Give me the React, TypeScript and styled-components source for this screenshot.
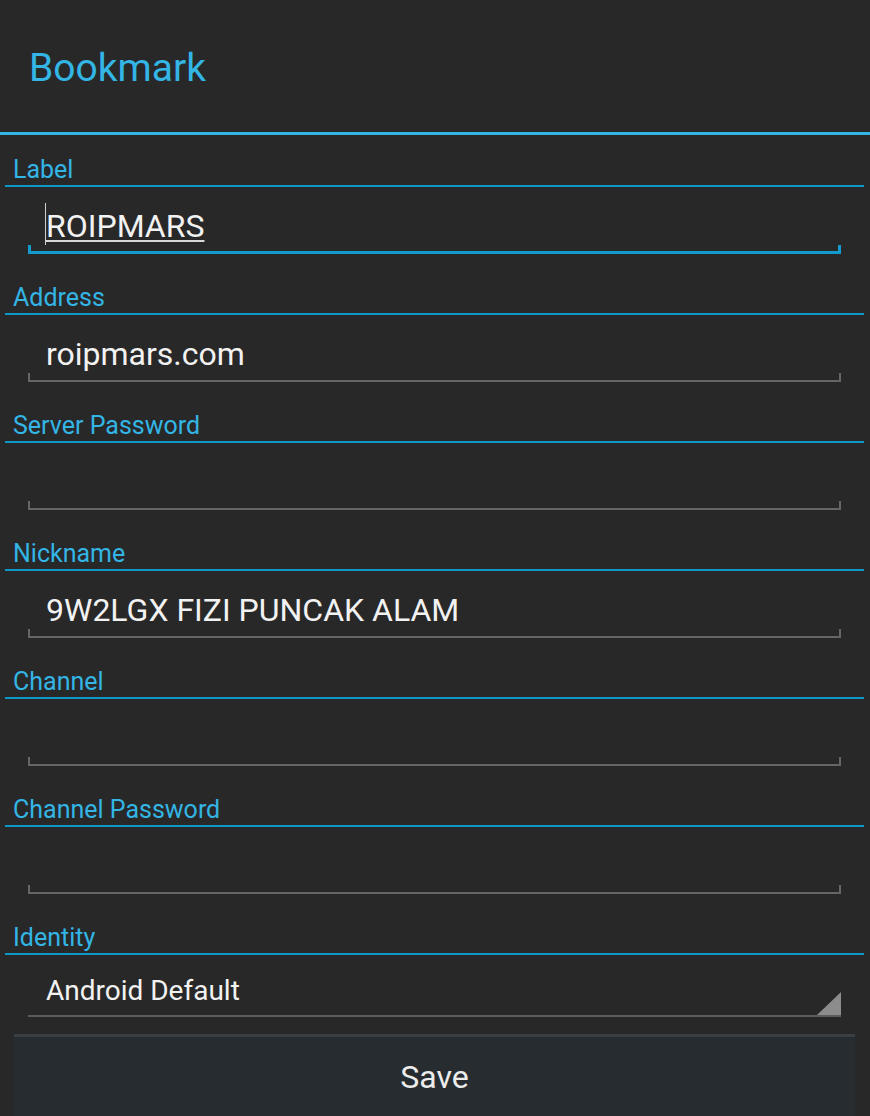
import styled, { createGlobalStyle } from "styled-components";

const GlobalStyle = createGlobalStyle`
  html, body {
    margin: 0;
    padding: 0;
    background: #282828;
    font-family: Roboto, "Noto Sans", sans-serif;
  }
`;

const Screen = styled.div`
  width: 870px;
  min-height: 1116px;
  background: #282828;
  overflow: hidden;
`;

const TitleBar = styled.header`
  height: 135px;
  display: flex;
  align-items: center;
  padding: 3px 0 0 29px;
  box-sizing: border-box;
  border-bottom: 3px solid #33b5e5;
`;

const Title = styled.h1`
  margin: 0;
  font-size: 39px;
  font-weight: 400;
  color: #33b5e5;
  line-height: 46px;
`;

const Form = styled.main`
  padding-top: 20px;
`;

const Category = styled.div`
  margin: 0 6px 0 5px;
  padding-left: 8px;
  font-size: 25px;
  line-height: 30px;
  color: #33b5e5;
  border-bottom: 2px solid #0f96c8;
`;

const Field = styled.div`
  margin: 0 29px 0 28px;
  padding: 20px 0 29px;
`;

const FieldText = styled.div<{ $composing?: boolean }>`
  position: relative;
  padding-left: 18px;
  height: 38px;
  font-size: 32px;
  line-height: 38px;
  color: #f2f2f2;
  white-space: nowrap;
  span {
    text-decoration: ${(p) => (p.$composing ? "underline" : "none")};
    text-decoration-thickness: 2px;
    text-underline-offset: 3px;
    text-decoration-color: #d8d8d8;
  }
`;

const Caret = styled.i`
  position: absolute;
  left: 17px;
  top: -4px;
  bottom: 0;
  width: 1px;
  background: #d0d0d0;
`;

const Underline = styled.div<{ $focused?: boolean }>`
  height: 9px;
  box-sizing: border-box;
  border: 0 solid ${(p) => (p.$focused ? "#1399cb" : "#666666")};
  border-width: ${(p) => (p.$focused ? "0 3px 3px 3px" : "0 2px 2px 2px")};
`;

const Spinner = styled.div`
  margin: 0 29px 0 28px;
  padding-top: 19px;
  display: flex;
  align-items: flex-end;
  border-bottom: 2px solid #595c60;
`;

const SpinnerText = styled.div`
  flex: 1;
  padding-left: 18px;
  margin-bottom: 7px;
  font-size: 28px;
  line-height: 34px;
  color: #f2f2f2;
`;

const Corner = styled.svg`
  display: block;
  width: 24px;
  height: 23px;
`;

const SaveButton = styled.button`
  display: block;
  margin: 17px 0 0 14px;
  width: 841px;
  padding: 21px 0 30px;
  border: 0;
  border-top: 3px solid #3a3f44;
  background: #272c30;
  color: #ececec;
  font-family: Roboto, "Noto Sans", sans-serif;
  font-size: 32px;
  line-height: 38px;
  text-align: center;
`;

interface IField {
  label: string;
  value: string;
  focused?: boolean;
}

const fields: IField[] = [
  { label: "Label", value: "ROIPMARS", focused: true },
  { label: "Address", value: "roipmars.com" },
  { label: "Server Password", value: "" },
  { label: "Nickname", value: "9W2LGX FIZI PUNCAK ALAM" },
  { label: "Channel", value: "" },
  { label: "Channel Password", value: "" },
];

export default function App() {
  return (
    <>
      <GlobalStyle />
      <Screen>
        <TitleBar>
          <Title>Bookmark</Title>
        </TitleBar>
        <Form>
          {fields.map((f) => (
            <section key={f.label}>
              <Category>{f.label}</Category>
              <Field>
                <FieldText $composing={f.focused}>
                  {f.focused && <Caret />}
                  <span>{f.value}</span>
                </FieldText>
                <Underline $focused={f.focused} />
              </Field>
            </section>
          ))}
          <section>
            <Category>Identity</Category>
            <Spinner>
              <SpinnerText>Android Default</SpinnerText>
              <Corner viewBox="0 0 24 23">
                <polygon points="24,0 24,23 0,23" fill="#8c8c8c" />
              </Corner>
            </Spinner>
          </section>
          <SaveButton>Save</SaveButton>
        </Form>
      </Screen>
    </>
  );
}
